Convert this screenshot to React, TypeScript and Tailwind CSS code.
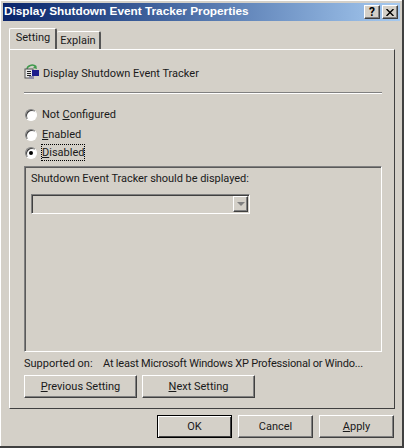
import React from 'react';

const font = "[font-family:Roboto,'Liberation_Sans',Arial,sans-serif]";
const raised =
  'border border-t-white border-l-white border-r-[#404040] border-b-[#404040] shadow-[inset_-1px_-1px_0_#808080]';

const Radio = ({ checked }: { checked?: boolean }) => (
  <span className="relative block h-[12px] w-[12px] shrink-0 rounded-full border border-t-[#808080] border-l-[#808080] border-r-white border-b-white bg-white shadow-[inset_1px_1px_0_#404040]">
    {checked && <span className="absolute left-[3px] top-[3px] h-[4px] w-[4px] rounded-full bg-black" />}
  </span>
);

const Key = ({ children }: { children: React.ReactNode }) => <span className="underline">{children}</span>;

const Button = ({ width, children, strong }: { width: string; children: React.ReactNode; strong?: boolean }) => (
  <button
    type="button"
    className={`flex h-[23px] ${width} items-center justify-center bg-[#d4d0c8] text-[11px] ${
      strong ? 'border border-black shadow-[inset_1px_1px_0_#fff,inset_-1px_-1px_0_#404040]' : raised
    }`}
  >
    {children}
  </button>
);

const TitleButton = ({ children }: { children: React.ReactNode }) => (
  <span className={`flex h-[14px] w-[16px] items-center justify-center bg-[#d4d0c8] text-[12px] font-bold leading-none text-black ${raised}`}>
    {children}
  </span>
);

const TrackerIcon = () => (
  <svg width="16" height="16" viewBox="0 0 16 16" className="shrink-0">
    <path d="M3 6 A5 4.5 0 0 1 12 3" fill="none" stroke="#3f9a4c" strokeWidth="1.5" />
    <path d="M12 1 L13 5 L9 4 Z" fill="#3f9a4c" />
    <rect x="1" y="5" width="8" height="9" fill="#e8e8e8" stroke="#555" />
    <path d="M3 7.5h4M3 9.5h4M3 11.5h4" stroke="#222" />
    <rect x="8" y="6" width="7" height="6" fill="#1c1c8c" />
    <rect x="5" y="12" width="5" height="3" fill="#8d8da8" />
  </svg>
);

export default function App() {
  return (
    <div className={`${font} h-[448px] w-[404px] overflow-hidden bg-[#d4d0c8] text-[11px] leading-none text-[#1a1a1a]`}>
      <div className="flex h-[448px] flex-col border-r-2 border-b-2 border-r-[#404040] border-b-[#404040] p-[3px] pr-[2px] shadow-[inset_1px_1px_0_#fff]">
        {/* Title bar */}
        <div className="flex h-[18px] shrink-0 items-center justify-between bg-gradient-to-r from-[#0a246a] to-[#a6caf0] pl-[1px] pr-[2px]">
          <span className="[font-family:'Liberation_Sans',Arial,sans-serif] text-[11.8px] font-bold text-white">Display Shutdown Event Tracker Properties</span>
          <div className="flex gap-[2px]">
            <TitleButton>?</TitleButton>
            <TitleButton>
              <svg width="8" height="7" viewBox="0 0 8 7">
                <path d="M0.5 0 L7.5 7 M7.5 0 L0.5 7" stroke="#000" strokeWidth="1.4" />
              </svg>
            </TitleButton>
          </div>
        </div>

        {/* Tabs */}
        <div className="ml-[6px] mt-[7px] flex h-[21px] shrink-0 items-end">
          <div className="flex h-[21px] w-[48px] items-center justify-center rounded-t-[2px] border-l border-t border-r-2 border-l-white border-t-white border-r-[#555] bg-[#d4d0c8] pb-[3px] pl-[1px]">
            Setting
          </div>
          <div className="flex h-[18px] w-[44px] items-center justify-center rounded-t-[2px] border-t border-r-2 border-t-white border-r-[#555]">
            Explain
          </div>
        </div>

        {/* Tab panel */}
        <div className="ml-[6px] mr-[5px] flex h-[360px] shrink-0 flex-col border border-t-white border-l-white border-r-[#404040] border-b-[#404040] pl-[14px] pr-[12px]">
          <div className="mt-[14px] flex h-[16px] items-center gap-[3px]">
            <TrackerIcon />
            <span className="pt-[2px]">Display Shutdown Event Tracker</span>
          </div>
          <div className="mt-[12px] h-[2px] shrink-0 border-t border-b border-t-[#808080] border-b-white" />

          <div className="mt-[14px] flex h-[13px] items-center gap-[5px] pl-[1px]">
            <Radio />
            <span>
              Not <Key>C</Key>onfigured
            </span>
          </div>
          <div className="mt-[7px] flex h-[13px] items-center gap-[5px] pl-[1px]">
            <Radio />
            <span>
              <Key>E</Key>nabled
            </span>
          </div>
          <div className="mt-[5px] flex h-[13px] items-center gap-[5px] pl-[1px]">
            <Radio checked />
            <span className="py-[2px] outline-1 outline-dotted outline-black">
              <Key>D</Key>isabled
            </span>
          </div>

          {/* Group box */}
          <div className="mt-[7px] h-[186px] shrink-0 border border-t-[#808080] border-l-[#808080] border-r-white border-b-white pl-[6px] pt-[6px] shadow-[inset_1px_1px_0_#5a5a5a]">
            <div className="h-[12px] tracking-[-0.05px]">Shutdown Event Tracker should be displayed:</div>
            <div className="mt-[9px] flex h-[20px] w-[219px] items-center justify-end border border-t-[#808080] border-l-[#808080] border-r-white border-b-white pr-[1px] shadow-[inset_1px_1px_0_#404040]">
              <span className={`flex h-[16px] w-[15px] items-center justify-center bg-[#d4d0c8] ${raised}`}>
                <span className="h-0 w-0 border-x-[4px] border-t-[4px] border-x-transparent border-t-[#808080]" />
              </span>
            </div>
          </div>

          <div className="mt-[5px] flex h-[12px] items-center whitespace-nowrap">
            <span className="w-[79px]">Supported on:</span>
            <span className="tracking-[-0.2px]">At least Microsoft Windows XP Professional or Windo...</span>
          </div>

          <div className="mt-[6px] flex gap-[5px]">
            <Button width="w-[113px]">
              <span>
                <Key>P</Key>revious Setting
              </span>
            </Button>
            <Button width="w-[113px]">
              <span>
                <Key>N</Key>ext Setting
              </span>
            </Button>
          </div>
        </div>

        {/* Dialog buttons */}
        <div className="mr-[6px] mt-[6px] flex justify-end gap-[6px]">
          <Button width="w-[75px]" strong>
            OK
          </Button>
          <Button width="w-[75px]">Cancel</Button>
          <Button width="w-[75px]">
            <span>
              <Key>A</Key>pply
            </span>
          </Button>
        </div>
      </div>
    </div>
  );
}
